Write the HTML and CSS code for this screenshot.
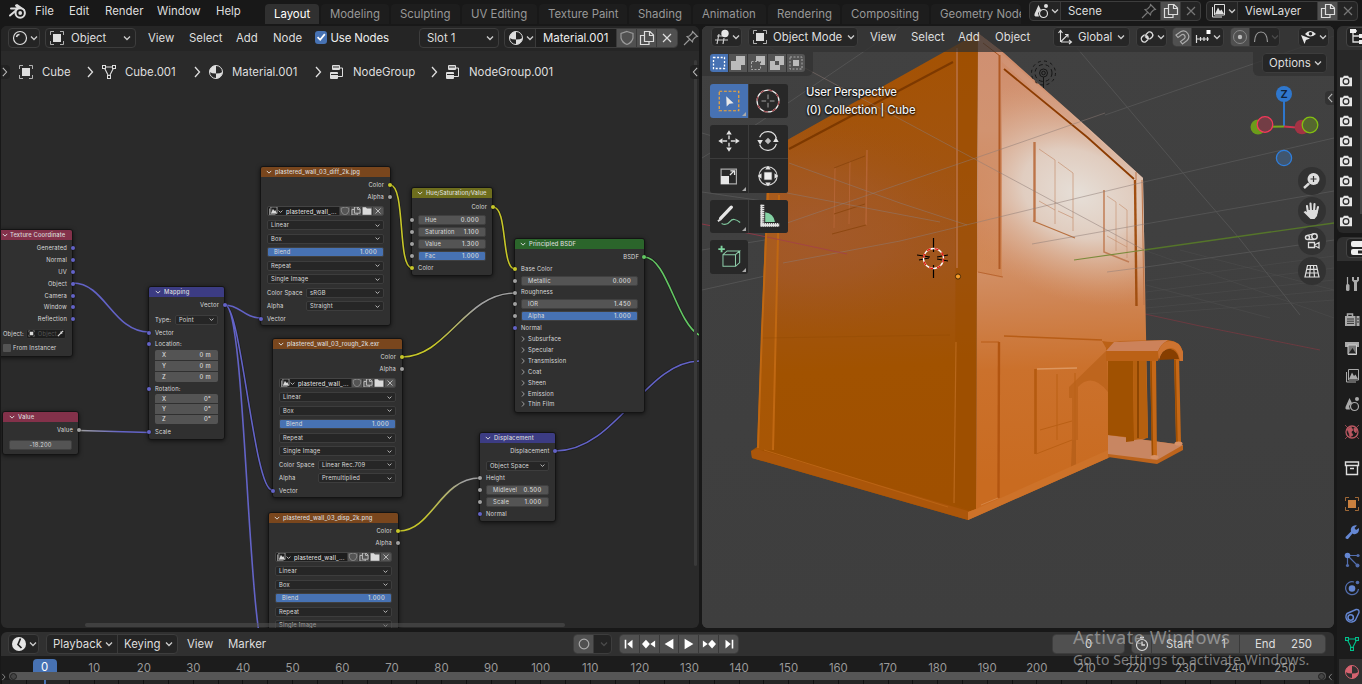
FILE: index.html
```html
<!DOCTYPE html>
<html lang="en">
<head>
<meta charset="utf-8">
<title>Blender</title>
<link rel="stylesheet" href="styles.css">
</head>
<body>
<svg class="defs" width="0" height="0">
  <symbol id="chev" viewBox="0 0 8 8"><path d="M1 2.5 4 5.5 7 2.5" fill="none" stroke="currentColor" stroke-width="1.3"/></symbol>
  <symbol id="right" viewBox="0 0 8 12"><path d="M2 1 6.5 6 2 11" fill="none" stroke="currentColor" stroke-width="1.3"/></symbol>
  <symbol id="obj" viewBox="0 0 16 16"><path d="M1.5 5V1.5H5M11 1.5h3.500V5M14.500 11v3.500H11M5 14.500H1.500V11" fill="none" stroke="currentColor" opacity=".75"/><rect x="4" y="4" width="8" height="8" fill="currentColor"/></symbol>
  <symbol id="mesh" viewBox="0 0 16 16"><path d="M3 3H13L8 13Z" fill="none" stroke="currentColor" stroke-width="1.1"/><g fill="#282828" stroke="currentColor"><rect x="1.500" y="1.500" width="3" height="3"/><rect x="11.500" y="1.500" width="3" height="3"/><rect x="6.500" y="11.500" width="3" height="3"/></g></symbol>
  <symbol id="mat" viewBox="0 0 16 16"><circle cx="8" cy="8" r="6.500" fill="none" stroke="currentColor"/><path d="M8 1.500A6.500 6.500 0 0 0 1.500 8Q4 9.500 8 9.500ZM8 9.500Q12 9.500 14.500 8A6.500 6.500 0 0 1 8 14.500Z" fill="currentColor"/></symbol>
  <symbol id="tree" viewBox="0 0 16 16"><rect x="3" y="1" width="8" height="5" rx="1" fill="currentColor"/><rect x="1" y="8" width="8" height="7" rx="1" fill="currentColor"/><path d="M11 4h2.500v8.500H9M1 11h8" fill="none" stroke="currentColor"/><path d="M2 10.500h7M4 3h6" stroke="#2a2a2a"/></symbol>
  <symbol id="shield" viewBox="0 0 16 16"><path d="M8 1.500 14 3.500V8Q13 12.500 8 14.500 3 12.500 2 8V3.500Z" fill="none" stroke="currentColor" stroke-width="1.2"/></symbol>
  <symbol id="copy" viewBox="0 0 16 16"><path d="M5.500 1.500H11L14.500 5V11.500H5.500ZM10.500 2V5.500H14M5 5.500H1.500V14.500H10V12" fill="none" stroke="currentColor" stroke-width="1.200"/></symbol>
  <symbol id="x" viewBox="0 0 16 16"><path d="M4 4 12 12M12 4 4 12" stroke="currentColor" stroke-width="1.200"/></symbol>
  <symbol id="pin" viewBox="0 0 16 16"><path d="M9.500 1.500 14.500 6.500 12.500 7 10 9.500 9.500 12 4 6.500 6.500 6 9 3.500ZM6.500 9.500 1 15" fill="none" stroke="currentColor" stroke-width="1.100"/></symbol>
  <symbol id="pic" viewBox="0 0 16 16"><path d="M4.500 4V1.500H14.500V12H4.500Z" fill="none" stroke="currentColor"/><path d="M5 11 8 4.500 10 8 11.500 6.500 14 11Z" fill="currentColor"/><path d="M2.500 4V14H12" fill="none" stroke="currentColor"/></symbol>
  <symbol id="folder" viewBox="0 0 16 16"><path d="M1 2H6L8 4H15V14H1Z" fill="currentColor"/></symbol>
  <symbol id="scene" viewBox="0 0 16 16"><path d="M5.500 2 8 7 5 10 6 13.500H2.500Q1 13 1.500 11Z" fill="currentColor"/><circle cx="10.500" cy="10.500" r="4" fill="none" stroke="currentColor" stroke-width="1.200"/><circle cx="13" cy="3" r="2" fill="currentColor"/></symbol>
  <symbol id="cam" viewBox="0 0 16 14"><path d="M1 3H4.500L5.500 1h5l1 2H15V13H1Z" fill="currentColor"/><circle cx="8" cy="7.500" r="3.300" fill="#e6e6e6" stroke="#2a2a2a" stroke-width="1.500"/></symbol>
  <symbol id="sel" viewBox="0 0 16 16"><path d="M2.500 2.500h11v11h-11z" fill="none" stroke="currentColor" stroke-width="1.300" stroke-dasharray="2 1.600"/></symbol>
</svg>

<div class="app">
  <header class="topbar">
    <svg class="logo" viewBox="0 0 20 18"><path d="M3 6.500H11L8 3.500M2 13.500 8.500 8" fill="none" stroke="#ddd" stroke-width="2" stroke-linecap="round"/><path d="M9 3 16 8" stroke="#ddd" stroke-width="2" stroke-linecap="round"/><circle cx="12.200" cy="11" r="4.700" fill="#181818" stroke="#ddd" stroke-width="2"/><circle cx="12.200" cy="11" r="1.900" fill="#ddd"/></svg>
    <nav class="menus"><span>File</span><span>Edit</span><span>Render</span><span>Window</span><span>Help</span></nav>
    <nav class="tabs"><span class="on">Layout</span><span>Modeling</span><span>Sculpting</span><span>UV Editing</span><span>Texture Paint</span><span>Shading</span><span>Animation</span><span>Rendering</span><span>Compositing</span><span>Geometry Nodes</span></nav>
    <div class="group scene"><span class="cell ed"><svg class="i"><use href="#scene"/></svg><svg class="c"><use href="#chev"/></svg></span><span class="cell name"><span>Scene</span><svg class="i dim"><use href="#pin"/></svg></span><span class="cell lit"><svg class="i"><use href="#copy"/></svg></span><span class="cell dim"><svg class="i"><use href="#x"/></svg></span></div>
    <div class="group layer"><span class="cell ed"><svg class="i"><use href="#pic"/></svg><svg class="c"><use href="#chev"/></svg></span><span class="cell name"><span>ViewLayer</span></span><span class="cell lit"><svg class="i"><use href="#copy"/></svg></span><span class="cell dim"><svg class="i"><use href="#x"/></svg></span></div>
  </header>

  <section class="shader">
    <div class="bar shader-bar">
      <div class="group"><span class="cell ed"><svg class="i" viewBox="0 0 16 16"><circle cx="8" cy="8" r="6.500" fill="none" stroke="#ddd" stroke-width="1.200"/><path d="M4.500 7Q5 4.500 7.500 4.500" fill="none" stroke="#ddd" stroke-width="1.500"/></svg><svg class="c"><use href="#chev"/></svg></span></div>
      <div class="group drop objsel"><svg class="i"><use href="#obj"/></svg><span>Object</span><svg class="c"><use href="#chev"/></svg></div>
      <nav class="mid"><span>View</span><span>Select</span><span>Add</span><span>Node</span></nav>
      <span class="check"><svg viewBox="0 0 12 12"><path d="M2.500 6 5 8.500 9.500 3" fill="none" stroke="#fff" stroke-width="1.700"/></svg></span><span class="usenodes">Use Nodes</span>
      <div class="group drop slot"><span>Slot 1</span><svg class="c"><use href="#chev"/></svg></div>
      <div class="group material"><span class="cell ed"><svg class="i"><use href="#mat"/></svg><svg class="c"><use href="#chev"/></svg></span><span class="cell name">Material.001</span><span class="cell lit soft"><svg class="i"><use href="#shield"/></svg></span><span class="cell lit"><svg class="i"><use href="#copy"/></svg></span><span class="cell lit"><svg class="i"><use href="#x"/></svg></span></div>
      <svg class="i pin"><use href="#pin"/></svg>
    </div>

    <svg class="links" viewBox="1 26 698 602">
      <defs>
        <linearGradient id="g1" gradientUnits="userSpaceOnUse" x1="80" y1="0" x2="149" y2="0"><stop offset="0" stop-color="#a0a0a0"/><stop offset=".6" stop-color="#6363c7"/></linearGradient>
        <linearGradient id="g2" gradientUnits="userSpaceOnUse" x1="402" y1="0" x2="515" y2="0"><stop offset=".3" stop-color="#c7c729"/><stop offset=".65" stop-color="#a1a1a1"/></linearGradient>
        <linearGradient id="g3" gradientUnits="userSpaceOnUse" x1="399" y1="0" x2="480" y2="0"><stop offset=".3" stop-color="#c7c729"/><stop offset=".8" stop-color="#a1a1a1"/></linearGradient>
      </defs>
      <g fill="none" stroke="#161616" stroke-width="3" opacity=".6"><path d="M390 185C406 185 397 268 412 268M493 207C508 207 501 269 515 269M402 357C447 357 465 293 515 293M644 257C667 257 676 322 699 335M555 451C617 451 645 361 700 361M225 305C241 305 254 490 272 490"/></g>
      <g fill="none" stroke-width="1.600">
        <path stroke="#6363c7" d="M73 283C105 283 113 332 149 332M225 305C240 305 244 318 261 318M225 305C241 305 254 490 272 490M225 305C247 305 247 664 269 664M555 451C617 451 645 361 700 361"/>
        <path stroke="url(#g1)" d="M79 430.500 149 432.500"/>
        <path stroke="#c7c729" d="M390 185C406 185 397 268 412 268M493 207C508 207 501 269 515 269"/>
        <path stroke="url(#g2)" d="M402 357C447 357 465 293 515 293"/>
        <path stroke="url(#g3)" d="M399 531C432 531 440 478 480 478"/>
        <path stroke="#63c763" d="M644 257C667 257 676 322 699 335"/>
      </g>
    </svg>

    <article class="node n-coord"><h3 class="red"><svg><use href="#chev"/></svg>Texture Coordinate</h3>
      <p class="r out v">Generated</p><p class="r out v">Normal</p><p class="r out v">UV</p><p class="r out v">Object</p><p class="r out v">Camera</p><p class="r out v">Window</p><p class="r out v">Reflection</p>
      <p class="r objrow">Object:<span class="f dark"><svg><use href="#obj"/></svg><em>Object</em><svg viewBox="0 0 8 8"><path d="M1 7 5 3M4 2 6 4M5 3 7 1" stroke="#ddd" stroke-width="1.400"/></svg></span></p>
      <p class="r inst"><i></i>From Instancer</p></article>

    <article class="node n-value"><h3 class="red"><svg><use href="#chev"/></svg>Value</h3><p class="r out g">Value</p><p class="r fld"><span class="f num one">-18.200</span></p></article>

    <article class="node n-map"><h3 class="blue"><svg><use href="#chev"/></svg>Mapping</h3>
      <p class="r out v">Vector</p><p class="r type">Type:<span class="f dark">Point<svg><use href="#chev"/></svg></span></p>
      <p class="r in v">Vector</p><p class="r in v">Location:</p>
      <div class="xyz"><span>X<b>0 m</b></span><span>Y<b>0 m</b></span><span>Z<b>0 m</b></span></div>
      <p class="r in v">Rotation:</p>
      <div class="xyz low"><span>X<b>0°</b></span><span>Y<b>0°</b></span><span>Z<b>0°</b></span></div>
      <p class="r in v">Scale</p></article>

    <article class="node img n-diff"><h3 class="brown"><svg><use href="#chev"/></svg>plastered_wall_03_diff_2k.jpg</h3>
      <p class="r out y">Color</p><p class="r out g">Alpha</p>
      <div class="file"><span><svg><use href="#pic"/></svg><svg class="s"><use href="#chev"/></svg></span><strong>plastered_wall_...</strong><span class="l dim"><svg><use href="#shield"/></svg></span><span class="l"><svg><use href="#copy"/></svg></span><span class="l"><svg><use href="#folder"/></svg></span><span class="l"><svg><use href="#x"/></svg></span></div>
      <p class="r d"><span class="f dark">Linear<svg><use href="#chev"/></svg></span></p><p class="r d"><span class="f dark">Box<svg><use href="#chev"/></svg></span></p><p class="r d"><span class="f num on">Blend<b>1.000</b></span></p><p class="r d"><span class="f dark">Repeat<svg><use href="#chev"/></svg></span></p><p class="r d"><span class="f dark">Single Image<svg><use href="#chev"/></svg></span></p>
      <p class="r d two">Color Space<span class="f dark">sRGB<svg><use href="#chev"/></svg></span></p><p class="r d two">Alpha<span class="f dark">Straight<svg><use href="#chev"/></svg></span></p><p class="r in v last">Vector</p></article>

    <article class="node img n-rough"><h3 class="brown"><svg><use href="#chev"/></svg>plastered_wall_03_rough_2k.exr</h3>
      <p class="r out y">Color</p><p class="r out g">Alpha</p>
      <div class="file"><span><svg><use href="#pic"/></svg><svg class="s"><use href="#chev"/></svg></span><strong>plastered_wall_...</strong><span class="l dim"><svg><use href="#shield"/></svg></span><span class="l"><svg><use href="#copy"/></svg></span><span class="l"><svg><use href="#folder"/></svg></span><span class="l"><svg><use href="#x"/></svg></span></div>
      <p class="r d"><span class="f dark">Linear<svg><use href="#chev"/></svg></span></p><p class="r d"><span class="f dark">Box<svg><use href="#chev"/></svg></span></p><p class="r d"><span class="f num on">Blend<b>1.000</b></span></p><p class="r d"><span class="f dark">Repeat<svg><use href="#chev"/></svg></span></p><p class="r d"><span class="f dark">Single Image<svg><use href="#chev"/></svg></span></p>
      <p class="r d two">Color Space<span class="f dark">Linear Rec.709<svg><use href="#chev"/></svg></span></p><p class="r d two">Alpha<span class="f dark">Premultiplied<svg><use href="#chev"/></svg></span></p><p class="r in v last">Vector</p></article>

    <article class="node img n-disp"><h3 class="brown"><svg><use href="#chev"/></svg>plastered_wall_03_disp_2k.png</h3>
      <p class="r out y">Color</p><p class="r out g">Alpha</p>
      <div class="file"><span><svg><use href="#pic"/></svg><svg class="s"><use href="#chev"/></svg></span><strong>plastered_wall_...</strong><span class="l dim"><svg><use href="#shield"/></svg></span><span class="l"><svg><use href="#copy"/></svg></span><span class="l"><svg><use href="#folder"/></svg></span><span class="l"><svg><use href="#x"/></svg></span></div>
      <p class="r d"><span class="f dark">Linear<svg><use href="#chev"/></svg></span></p><p class="r d"><span class="f dark">Box<svg><use href="#chev"/></svg></span></p><p class="r d"><span class="f num on">Blend<b>1.000</b></span></p><p class="r d"><span class="f dark">Repeat<svg><use href="#chev"/></svg></span></p><p class="r d"><span class="f dark">Single Image<svg><use href="#chev"/></svg></span></p></article>

    <article class="node n-hsv"><h3 class="olive"><svg><use href="#chev"/></svg>Hue/Saturation/Value</h3>
      <p class="r out y">Color</p><p class="r in g"><span class="f num">Hue<b>0.000</b></span></p><p class="r in g"><span class="f num">Saturation<b>1.100</b></span></p><p class="r in g"><span class="f num">Value<b>1.300</b></span></p><p class="r in g"><span class="f num on">Fac<b>1.000</b></span></p><p class="r in y">Color</p></article>

    <article class="node n-bsdf"><h3 class="green"><svg><use href="#chev"/></svg>Principled BSDF</h3>
      <p class="r out s">BSDF</p><p class="r in y">Base Color</p><p class="r in g"><span class="f num">Metallic<b>0.000</b></span></p><p class="r in g">Roughness</p><p class="r in g"><span class="f num">IOR<b>1.450</b></span></p><p class="r in g"><span class="f num on">Alpha<b>1.000</b></span></p><p class="r in v">Normal</p>
      <p class="r pan"><svg><use href="#right"/></svg>Subsurface</p><p class="r pan"><svg><use href="#right"/></svg>Specular</p><p class="r pan"><svg><use href="#right"/></svg>Transmission</p><p class="r pan"><svg><use href="#right"/></svg>Coat</p><p class="r pan"><svg><use href="#right"/></svg>Sheen</p><p class="r pan"><svg><use href="#right"/></svg>Emission</p><p class="r pan"><svg><use href="#right"/></svg>Thin Film</p></article>

    <article class="node n-dpl"><h3 class="blue"><svg><use href="#chev"/></svg>Displacement</h3>
      <p class="r out v">Displacement</p><p class="r space"><span class="f dark">Object Space<svg><use href="#chev"/></svg></span></p><p class="r in g">Height</p><p class="r in g"><span class="f num">Midlevel<b>0.500</b></span></p><p class="r in g"><span class="f num">Scale<b>1.000</b></span></p><p class="r in v">Normal</p></article>

    <div class="crumbs"><svg class="i"><use href="#obj"/></svg><span>Cube</span><svg class="a"><use href="#right"/></svg><svg class="i"><use href="#mesh"/></svg><span>Cube.001</span><svg class="a"><use href="#right"/></svg><svg class="i"><use href="#mat"/></svg><span>Material.001</span><svg class="a"><use href="#right"/></svg><svg class="i"><use href="#tree"/></svg><span>NodeGroup</span><svg class="a"><use href="#right"/></svg><svg class="i"><use href="#tree"/></svg><span>NodeGroup.001</span></div>
    <i class="sb-v"></i><i class="sb-h"></i>
    <span class="flap fl"><svg><use href="#right"/></svg></span><span class="flap fr"><svg><use href="#right"/></svg></span>
  </section>

  <section class="view">
    <svg class="world" viewBox="702 26 632 602">
      <defs>
        <linearGradient id="sky" x1="0" y1="0" x2="0" y2="1"><stop offset="0" stop-color="#414141"/><stop offset="1" stop-color="#3e3e3e"/></linearGradient>
        <linearGradient id="lf" gradientUnits="userSpaceOnUse" x1="850" y1="60" x2="880" y2="500"><stop offset="0" stop-color="#a45204"/><stop offset=".25" stop-color="#a2540f"/><stop offset=".45" stop-color="#a1561c"/><stop offset=".7" stop-color="#a15200"/><stop offset="1" stop-color="#a05000"/></linearGradient>
        <radialGradient id="lg" gradientUnits="userSpaceOnUse" cx="0" cy="0" r="1" gradientTransform="translate(810 225) scale(170 110)"><stop offset="0" stop-color="#a45c34" stop-opacity=".7"/><stop offset=".5" stop-color="#a35a2c" stop-opacity=".5"/><stop offset="1" stop-color="#a05418" stop-opacity="0"/></radialGradient>
        <linearGradient id="rf" gradientUnits="userSpaceOnUse" x1="1040" y1="50" x2="1055" y2="480"><stop offset="0" stop-color="#cf8b68"/><stop offset=".35" stop-color="#d8a588"/><stop offset=".58" stop-color="#cf8554"/><stop offset=".74" stop-color="#cb712c"/><stop offset="1" stop-color="#c96b20"/></linearGradient>
        <radialGradient id="rg" gradientUnits="userSpaceOnUse" cx="0" cy="0" r="1" gradientTransform="translate(1078 194) rotate(24) scale(145 105)"><stop offset="0" stop-color="#e6dfd8"/><stop offset=".4" stop-color="#e2d3c8" stop-opacity=".88"/><stop offset=".75" stop-color="#dcb59d" stop-opacity=".4"/><stop offset="1" stop-color="#d79c78" stop-opacity="0"/></radialGradient>
        <linearGradient id="strip" x1="0" y1="0" x2="0" y2="1"><stop offset="0" stop-color="#cf8f72"/><stop offset=".4" stop-color="#d19370"/><stop offset=".8" stop-color="#cd7a46" stop-opacity=".6"/><stop offset="1" stop-color="#cb6d22" stop-opacity=".2"/></linearGradient>
        <linearGradient id="edge" gradientUnits="userSpaceOnUse" x1="985" y1="40" x2="1143" y2="178"><stop offset="0" stop-color="#cf8f70"/><stop offset=".6" stop-color="#d6a488"/><stop offset="1" stop-color="#ddc3b3"/></linearGradient>
        <clipPath id="rc"><path d="M978 33 1004 53 1087 127 1143 178 1148 437 1108 458 968 520 976 509Z"/></clipPath>
      </defs>
      <rect x="702" y="26" width="632" height="602" fill="url(#sky)"/>
      <g stroke="#535353" fill="none">
        <path d="M702 158 760 122 900 27M702 192 770 202M702 133 712 136M702 250 765 240M702 290 765 276M770 48 803 67M1105 115 1305 46 1334 36M1077 48 1200 193 1239 238 1300 315M1144 182 1334 138M1145 224 1334 191M1146 267 1334 240" />
        <path d="M1146 281 1334 256M1146 292 1334 268M1146 300 1334 280M1146 308 1334 290M1144 250 1334 318M1146 285 1270 318M1146 314 1334 300M1180 250 1334 290" opacity=".4"/>
      </g>
      <path d="M702 224 767 237" stroke="#8a3845"/>
      <path d="M1145 314 1200 326 1320 350" stroke="#6a3a40" fill="none"/>
      <path d="M1144 250 1334 223" stroke="#55752a" stroke-width="1.400"/>

      <path d="M978 33 953 47 789 139 768 155 763 290 757 447 751 451 752 458 968 520 976 512Z" fill="url(#lf)"/>
      <path d="M978 33 953 47 789 139 768 155 763 290 757 447 751 451 752 458 968 520 976 512Z" fill="url(#lg)"/>
      <path d="M768 155 780 150 774 450 757 450 763 290Z" fill="#b9650f" opacity=".3"/>
      <path d="M779 195 773 450M768 193 762 330 758 448" stroke="#c06812" stroke-width="2" fill="none"/>
      <path d="M953 62 789 149" stroke="#7d3900" stroke-width="2.200"/>
      <path d="M956 47 978 33 976 512 955 505Z" fill="#9d4e00" opacity=".6"/>
      <path d="M957 48V268" stroke="#b87248" stroke-width="1.500"/><path d="M956 342 954 503" stroke="#b8671a" stroke-width="1.200"/>
      <path d="M751 451 757 449 968 511V520L752 458Z" fill="#ab560a"/><path d="M764 450 948 507" stroke="#ba6414"/>
      <path d="M763 338 950 335" stroke="#8d4700" opacity=".3"/>
      <g stroke="#b9683a" fill="none" opacity=".8"><path d="M835 168 834 228M850 161 849 224"/><path d="M867 150 866 225" stroke-width="1.500"/><path d="M834 168 865 156M834 214 865 204M832 234 866 225" stroke="#8a450d"/></g>

      <path d="M978 33 1004 53 1087 127 1143 178 1148 437 1108 458 968 520V512L976 509Z" fill="url(#rf)"/>
      <g clip-path="url(#rc)"><rect x="960" y="30" width="200" height="400" fill="url(#rg)"/>
        <path d="M978 33 1002 50V278L977 272Z" fill="url(#strip)"/>
        <path d="M978 33 1143 178 1140 182 1002 62Z" fill="url(#edge)" opacity=".8"/></g>
      <path d="M1004 69 1087 137 1134 179" stroke="#8c3c02" stroke-width="1.800" fill="none"/>
      <path d="M983 43 1000 56" stroke="#a2501c"/>
      <path d="M999.500 55V269" stroke="#b05a25" stroke-width="2"/><path d="M978 272 1003 277" stroke="#b96530"/>
      <path d="M1135 180 1136.500 306" stroke="#a14f11" stroke-width="2.400"/><path d="M1136 172V180M1142 180 1144 305" stroke="#bd7448"/>
      <path d="M1004 336 1102 340" stroke="#b85d16" stroke-width="1.500"/>
      <path d="M981 342H999" stroke="#b85d16"/><path d="M999 342 998.500 498" stroke="#b25510" stroke-width="2.400"/><path d="M981 505 998 498" stroke="#d48444"/>
      <g fill="none" stroke="#c28662"><path d="M1034.500 142V221" stroke="#bd7448" stroke-width="2.400"/><path d="M1033 221 1075 238" stroke="#b8703f" stroke-width="1.300"/><path d="M1039 149 1055 160V224M1058 162 1073 173V231M1039 201 1055 210M1058 211 1073 218" opacity=".6"/>
        <path d="M1104 190V252L1129 262" stroke="#c07d55" stroke-width="1.500"/><path d="M1107 196 1116 202V251M1119 204 1127 210V258M1107 236 1116 241 1127 247" opacity=".55"/></g>
      <path d="M1035.500 369V454" stroke="#b55b10" stroke-width="2.600"/>
      <path d="M1037 369 1077 368" stroke="#dc965f" stroke-width="1.500"/>
      <path d="M1057 374V440M1036 454 1072 440M1040 430 1072 421M1075 373V440" stroke="#ba6015" fill="none"/>
      <path d="M1069 387 1107 350 1108 392Q1092 372 1078 387V440H1072V398H1069Z" fill="#b9611a" opacity=".75"/>
      <path d="M1072 440H1076V464H1081V470L1071 468Z" fill="#b9611a"/>
      <path d="M968 512 976 509 1108 450V458L968 520Z" fill="#cd7229"/>

      <path d="M1108 435 1183 445 1183 450 1157 464 1108 457Z" fill="#bd641c"/><path d="M1108 435 1183 445 1157 460 1108 454Z" fill="#c88662"/>
      <path d="M1108 358 1133 358 1134 441 1126 442V437L1108 435Z" fill="#a05101"/>
      <path d="M1133 358H1146L1148 438 1134 440Z" fill="#b5600f"/><path d="M1138 360V438" stroke="#8d4602" stroke-width="2"/>
      <path d="M1174 357H1179L1181 443H1176ZM1150 358H1156L1157 458H1152Z" fill="#c56817"/><path d="M1151 360 1152.500 457M1175 360 1177 443" stroke="#9e4e00" stroke-width="1.500"/>
      <ellipse cx="1154.500" cy="457" rx="4" ry="2" fill="#d79166"/><ellipse cx="1178.500" cy="443.500" rx="4" ry="2" fill="#d79166"/>
      <path d="M1102 341Q1113 343 1120 341L1168 340Q1180 341 1183 352V361H1179Q1178 352 1170 349 1160 350 1158 361H1106V348Z" fill="#bb6116"/>
      <path d="M1114 342 1168 340Q1160 345 1158 351H1106Z" fill="#cc825a"/>
      <path d="M1158 352Q1162 341 1170 341 1180 341 1183 352V361H1180Q1178 348 1170 348 1162 349 1159 361Z" fill="#cd7330"/>
      <path d="M1159 360Q1162 349 1170 349 1177 350 1179 359Z" fill="#873e00"/>

      <g stroke="#8e7b76" fill="none" opacity=".5"><path d="M787 223 900 184 1022 142 1105 113M803 67 900 119 1144 250M783 263 900 241 1144 182M789 163 900 203 967 225M1032 244 1145 224M1107 272 1146 267M787 193 940 222"/></g>
      <path d="M767 237 847 254" stroke="#a5414a" opacity=".8"/><path d="M1074 260 1144 250" stroke="#7b8b3c" stroke-width="1.200"/>

      <g fill="none" stroke="#161616"><circle cx="1043.500" cy="73" r="12" stroke-dasharray="3 3.300"/><circle cx="1043.500" cy="73" r="8.500" stroke-dasharray="4 3"/><circle cx="1043.500" cy="73" r="4"/><circle cx="1043.500" cy="73" r="1.800"/><path d="M1043.500 77V88"/></g>
      <path d="M933.500 238V252M933.500 265V278M917 255 930 257M919 260 929 258M937 257 948 255M937 259 948 261" stroke="#000" stroke-width="1.200"/>
      <circle cx="933.500" cy="258.500" r="10" fill="none" stroke="#fff" stroke-width="1.300"/><circle cx="933.500" cy="258.500" r="10" fill="none" stroke="#e8140c" stroke-width="1.300" stroke-dasharray="4 4"/>
      <circle cx="958" cy="276.500" r="2.600" fill="#f59c28" stroke="#4a2a08"/>

      <g stroke-width="2"><path d="M1284 100V126" stroke="#2e76cc"/><path d="M1284 126.500 1262 127" stroke="#7ba81a"/><path d="M1284 126.500 1302 128" stroke="#d03550"/></g>
      <circle cx="1258" cy="127" r="7.500" fill="#6c9c1a"/><circle cx="1302" cy="127" r="7.300" fill="#a23344"/>
      <circle cx="1265" cy="124.500" r="7.800" fill="#733d45" stroke="#f5385a" stroke-width="1.300"/><circle cx="1310" cy="125" r="7.800" fill="#55672f" stroke="#83c011" stroke-width="1.300"/>
      <circle cx="1284" cy="94" r="8" fill="#2f77cd"/><circle cx="1284" cy="158" r="7.600" fill="#40566f" stroke="#2f7fdd" stroke-width="1.300"/>
      <text x="1284" y="98" class="axis">Z</text>
    </svg>

    <div class="bar view-bar">
      <div class="group"><span class="cell ed"><svg class="i" viewBox="0 0 16 16"><path d="M3 7H9M1 11H14M5 5 3 15M10 9 9 15" stroke="#ccc" stroke-width="1.200"/><circle cx="11" cy="4.500" r="3.700" fill="#e6e6e6"/></svg><svg class="c"><use href="#chev"/></svg></span></div>
      <div class="group drop mode"><svg class="i"><use href="#obj"/></svg><span>Object Mode</span><svg class="c"><use href="#chev"/></svg></div>
      <nav class="mid vm"><span>View</span><span>Select</span><span>Add</span><span>Object</span></nav>
      <div class="group drop orient"><svg class="i" viewBox="0 0 16 16"><path d="M3.500 13V2M1.500 4 3.500 1.500 5.500 4M4 13H14M12 11 14.500 13 12 15M4 12.500 11 5.500M8 5.500H11V8.500" fill="none" stroke="#ddd" stroke-width="1.100"/></svg><span>Global</span><svg class="c"><use href="#chev"/></svg></div>
      <div class="group pivot"><span class="cell ed"><svg class="i" viewBox="0 0 16 16"><path d="M7 5.500 9.500 3A3.300 3.300 0 0 1 13.500 7.500L11 10M9 10.500 6.500 13A3.300 3.300 0 0 1 2.500 8.500L5 6" fill="none" stroke="#ddd" stroke-width="1.300"/><path d="M5 6Q8 5 9 8T9 10.500M7 5.500Q5 8 8 9.500L11 10" fill="none" stroke="#ddd"/><circle cx="8" cy="8" r="1.500" fill="#ddd"/></svg><svg class="c"><use href="#chev"/></svg></span></div>
      <div class="group snap"><span class="cell lit soft"><svg class="i" viewBox="0 0 16 16"><path d="M2 6 7 2.500A5.500 5.500 0 0 1 13 11.500L8.500 15 6.500 12.500 10.500 9.500A2.500 2.500 0 0 0 8 5.500L4 8.500Z" fill="none" stroke="#aaa" stroke-width="1.200"/></svg></span><span class="cell ed"><svg class="i" viewBox="0 0 16 16"><path d="M1.500 6V14M5.500 8V12M9 8V12M12.500 8V12M1.500 10H14" stroke="#ddd" stroke-width="1.200"/><rect x="11.500" y="1" width="4" height="4" fill="#fff"/></svg><svg class="c"><use href="#chev"/></svg></span></div>
      <div class="group prop"><span class="cell lit"><svg class="i" viewBox="0 0 16 16"><circle cx="8" cy="8" r="6.500" fill="none" stroke="#888"/><circle cx="8" cy="8" r="2.200" fill="#bbb"/></svg></span><span class="cell ed"><svg class="i dim" viewBox="0 0 16 16"><path d="M1.500 13Q2 3 8 3T14.500 13" fill="none" stroke="#999" stroke-width="1.200"/></svg><svg class="c dimmer"><use href="#chev"/></svg></span></div>
      <div class="group vis"><span class="cell ed"><svg class="i" viewBox="0 0 16 16"><path d="M4 5Q9-1 15 5 9 10 4 5Z" fill="#e6e6e6"/><circle cx="9.500" cy="4.800" r="1.800" fill="#222"/><path d="M0 6 9 9.500 5 11 3.500 15Z" fill="#e6e6e6"/></svg><svg class="c"><use href="#chev"/></svg></span></div>
    </div>
    <div class="subbar">
      <div class="modes"><div class="segs"><span class="on"><svg><use href="#sel"/></svg></span><span><svg viewBox="0 0 16 16"><path d="M1 6H6V1H15V10H11V15H1Z" fill="#bbb"/></svg></span><span><svg viewBox="0 0 16 16"><path d="M6 1H15V10H11V6H6Z" fill="#bbb"/><path d="M1.500 6.500h9v8h-9z" fill="none" stroke="#aaa" stroke-dasharray="2 1.500"/></svg></span><span><svg viewBox="0 0 16 16"><path fill-rule="evenodd" d="M1 6H6V1H15V10H11V15H1ZM6 6V10H10V6Z" fill="#bbb"/></svg></span><span><svg viewBox="0 0 16 16"><path d="M2 2h12v12H2z" fill="none" stroke="#aaa" stroke-dasharray="2 1.500"/><path d="M5 5h6v6H5z" fill="#bbb"/></svg></span></div></div>
      <div class="opts"><div class="group drop">Options<svg class="c"><use href="#chev"/></svg></div></div>
    </div>
    <div class="tools">
      <div class="set"><span class="on corner"><svg viewBox="0 0 28 28"><rect x="3.500" y="3.500" width="21" height="21" fill="none" stroke="#f5a733" stroke-width="1.300" stroke-dasharray="3.200 1.800"/><path d="M11 9 19 16.500 14.500 17 11.500 20Z" fill="#e8e8e8"/></svg></span><span><svg viewBox="0 0 28 28"><circle cx="14" cy="14" r="11.800" fill="none" stroke="#eee" stroke-width="1.300"/><circle cx="14" cy="14" r="11.800" fill="none" stroke="#9a4147" stroke-width="1.300" stroke-dasharray="4.700 4.570"/><path d="M14 7V12M14 16V21M7 14H12M16 14H21" stroke="#aaa"/></svg></span></div>
      <div class="set"><span><svg viewBox="0 0 28 28"><path d="M14 8V12M14 16V20M7 14H12M16 14H21" stroke="#ddd" stroke-width="1.500"/><path d="M14 2.500 17 7H11ZM14 25.500 17 21H11ZM2.500 14 7 11V17ZM25.500 14 21 11V17Z" fill="#e3e3e3"/></svg></span><span><svg viewBox="0 0 28 28"><path d="M5 10A9.500 9.500 0 0 1 23 11M23 17A9.500 9.500 0 0 1 5 18" fill="none" stroke="#ddd" stroke-width="1.300"/><path d="M14 10.500 17.500 14 14 17.500 10.500 14Z" fill="#bbb"/><path d="M22.500 10 25.500 15H19.500ZM5.500 18 2.500 13H8.500Z" fill="#e3e3e3"/></svg></span>
        <span class="corner"><svg viewBox="0 0 28 28"><path d="M5.500 14V6.500H22V22.500H14" fill="none" stroke="#aaa" stroke-width="1.300"/><rect x="5" y="14" width="9" height="9" fill="#e6e6e6"/><path d="M15 13 19 9M15.500 8.500H20V13" fill="none" stroke="#e6e6e6" stroke-width="1.400"/></svg></span><span><svg viewBox="0 0 28 28"><circle cx="14" cy="14" r="9.800" fill="none" stroke="#ccc" stroke-width="1.300"/><rect x="9.500" y="9.500" width="9" height="9" fill="#eee" stroke="#282828"/><path d="M14 3 17 7H11ZM14 25 17 21H11ZM3 14 7 11V17ZM25 14 21 11V17Z" fill="#e3e3e3"/></svg></span></div>
      <div class="set"><span class="corner"><svg viewBox="0 0 28 28"><path d="M5 16.500 16.500 4.500" stroke="#e6e6e6" stroke-width="3.600" stroke-linecap="round"/><path d="M2 19.500 5.500 17.500" stroke="#ddd" stroke-width="2"/><path d="M6 22Q11 25 15 20T26 21" fill="none" stroke="#7fc79d" stroke-width="1.300"/></svg></span><span><svg viewBox="0 0 28 28"><path d="M8 2V25M6 23.500H26" fill="none" stroke="#e3e3e3" stroke-width="4" stroke-dasharray="1.500 .7"/><path d="M7 2V25M7 24H26" stroke="#e3e3e3" stroke-width="2"/><path d="M11 10Q20 11 21.500 20.500H11Z" fill="#84d2a4"/></svg></span></div>
      <div class="set single"><span class="corner"><svg viewBox="0 0 28 28"><path d="M7.500 11.500H21V24H7.500ZM7.500 11.500 12 7.500H25.500L21 11.500M25.500 7.500V20L21 24" fill="none" stroke="#8ccba8" stroke-width="1.100"/><path d="M6 2V9M2.500 5.500H9.500" stroke="#7fd5a0" stroke-width="2"/></svg></span></div>
    </div>
    <div class="info">User Perspective<br>(0) Collection | Cube</div>
    <div class="nav"><span><svg viewBox="0 0 20 20"><circle cx="11.500" cy="8" r="6" fill="#ddd"/><path d="M2 17 7 12.500" stroke="#ddd" stroke-width="2.400"/><path d="M8.500 8H14.500M11.500 5V11" stroke="#333" stroke-width="1.200"/></svg></span><span><svg viewBox="0 0 20 20"><path d="M6 12 5 5M9 11 8.500 2.500M12 11 12.500 3M14.500 12 16 6" stroke="#ddd" stroke-width="2.100" stroke-linecap="round"/><path d="M5 9H16L15 15 12.500 18H8.500L1.500 11 3.500 10 6 12Z" fill="#ddd"/></svg></span><span><svg viewBox="0 0 20 20"><circle cx="5.500" cy="6.500" r="2" fill="none" stroke="#ddd" stroke-width="1.500"/><circle cx="12.500" cy="5.500" r="2.700" fill="none" stroke="#ddd" stroke-width="1.500"/><path d="M5.500 4.300 12 2.800M6 8.500H12M6.500 11.500H12.500V16.500H6.500ZM12.500 14 17 11.500V17L12.500 14.500" fill="none" stroke="#ddd" stroke-width="1.300"/></svg></span><span><svg viewBox="0 0 20 20"><path d="M5.500 4.500H14.500L17 16H3ZM4.500 8.300H15.500M3.800 12H16.200M8.500 4.500 7.500 16M11.500 4.500 12.500 16" fill="none" stroke="#ddd" stroke-width="1.200"/></svg></span></div>
    <span class="flap fv"><svg><use href="#right"/></svg></span>
  </section>

  <section class="timeline">
    <div class="bar time-bar">
      <div class="group"><span class="cell ed"><svg class="i" viewBox="0 0 16 16"><circle cx="8" cy="8" r="7" fill="#e6e6e6"/><path d="M9.500 2.500 7 8.500 10.500 12" fill="none" stroke="#222" stroke-width="1.700"/></svg><svg class="c"><use href="#chev"/></svg></span></div>
      <div class="group play"><span class="cell">Playback<svg class="c"><use href="#chev"/></svg></span><span class="cell">Keying<svg class="c"><use href="#chev"/></svg></span></div>
      <nav class="mid tm"><span>View</span><span>Marker</span></nav>
      <div class="group rec"><span class="cell lit"><svg class="i" viewBox="0 0 16 16"><circle cx="8" cy="8" r="4.800" fill="none" stroke="#aaa" stroke-width="1.200"/></svg></span><span class="cell"><svg class="c dimmer"><use href="#chev"/></svg></span></div>
      <div class="group transport"><span class="cell lit"><svg viewBox="0 0 16 16"><path d="M4 3V13" stroke="#fff" stroke-width="1.800"/><path d="M12 3V13L6 8Z" fill="#fff"/></svg></span><span class="cell lit"><svg viewBox="0 0 16 16"><path d="M0 8 4.500 3 9 8 4.500 13ZM15 4V12L9.500 8Z" fill="#fff"/></svg></span><span class="cell lit"><svg viewBox="0 0 16 16"><path d="M13 2V14L3 8Z" fill="#fff"/></svg></span><span class="cell lit"><svg viewBox="0 0 16 16"><path d="M3 2V14L13 8Z" fill="#fff"/></svg></span><span class="cell lit"><svg viewBox="0 0 16 16"><path d="M7 8 11.500 3 16 8 11.500 13ZM1 4V12L6.500 8Z" fill="#fff"/></svg></span><span class="cell lit"><svg viewBox="0 0 16 16"><path d="M12 3V13" stroke="#fff" stroke-width="1.800"/><path d="M4 3V13L10 8Z" fill="#fff"/></svg></span></div>
      <div class="group frame"><span class="cell lit">0</span></div>
      <div class="group range"><span class="cell lit"><svg class="i" viewBox="0 0 16 16"><circle cx="8" cy="9" r="5.500" fill="none" stroke="#ddd" stroke-width="1.200"/><path d="M8 5.500V9H11M6 1.500H10" fill="none" stroke="#ddd" stroke-width="1.300"/></svg></span><span class="cell lit val">Start<b>1</b></span><span class="cell lit val">End<b>250</b></span></div>
    </div>
    <div class="ruler"><span class="cur"><b>0</b></span><span>10</span><span>20</span><span>30</span><span>40</span><span>50</span><span>60</span><span>70</span><span>80</span><span>90</span><span>100</span><span>110</span><span>120</span><span>130</span><span>140</span><span>150</span><span>160</span><span>170</span><span>180</span><span>190</span><span>200</span><span>210</span><span>220</span><span>230</span><span>240</span><span>250</span></div>
    <div class="scroll"><i></i><i></i></div>
    <div class="ticks"><i></i></div>
    <svg class="tl-l"><use href="#right"/></svg><svg class="tl-r"><use href="#right"/></svg>
  </section>

  <aside class="outliner"><div class="ohead"><span><svg viewBox="0 0 20 16"><path d="M1 2H7M3 3V13H10M3 7H10" fill="none" stroke="#ddd" stroke-width="1.300"/><rect x="0" y="0" width="6" height="4" fill="#eee"/><rect x="9" y="5" width="10" height="4" fill="#eee"/><rect x="9" y="11" width="10" height="4" fill="#eee"/></svg></span></div>
    <div class="cams"><svg><use href="#cam"/></svg><svg><use href="#cam"/></svg><svg><use href="#cam"/></svg><svg><use href="#cam"/></svg><svg><use href="#cam"/></svg><svg><use href="#cam"/></svg><svg><use href="#cam"/></svg><svg><use href="#cam"/></svg></div><i class="osb"></i></aside>

  <aside class="props"><div class="phead"><span><svg viewBox="0 0 20 16"><rect x="1" y="1" width="20" height="6" rx="2" fill="#eee"/><rect x="1" y="9" width="20" height="6" rx="2" fill="#eee"/><path d="M12 2.500H20V5.500H12ZM8 10.500H20V13.500H8Z" fill="#222"/></svg></span></div>
    <div class="ptabs">
      <svg class="t0" viewBox="0 0 16 16"><path d="M3.500 1V8M3.500 8V14" stroke="#aaa" stroke-width="1.200"/><rect x="2" y="8" width="3.500" height="7" rx="1.500" fill="#aaa"/><path d="M8 1V4.500L10 6.500V15H13V6.500L15 4.500V1H13V4H10V1Z" fill="#aaa"/></svg>
      <svg viewBox="0 0 16 16"><path d="M3.500 4V2H8.500V4" fill="none" stroke="#aaa" stroke-width="1.500"/><path d="M1 4H11.500V14H1ZM12.500 4H15.500V14H12.500Z" fill="#aaa"/><path d="M3 7H10M3 9.200H10M3 11.400H10M13 7H15M13 10H15" stroke="#333"/></svg>
      <svg viewBox="0 0 16 16"><path d="M1 2H15V7H1Z" fill="#aaa"/><path d="M4 5H12.500V14.500H4Z" fill="#777" stroke="#ccc"/><path d="M5 13 8.500 8 11.500 13Z" fill="#222"/></svg>
      <svg class="lt"><use href="#pic"/></svg>
      <svg class="lt"><use href="#scene"/></svg>
      <svg class="rd" viewBox="0 0 16 16"><circle cx="8" cy="8" r="6" fill="none" stroke="#b95761" stroke-width="1.300"/><path d="M3 5 7 3 9 6 7 8 9 11 6 13 5 9ZM10 4 13 5 12 9 10 7ZM1 1 4 4M12 12 15 15M15 1 13 3M1 15 4 12" fill="#b95761" stroke="#b95761" stroke-width=".7"/></svg>
      <svg class="gap" viewBox="0 0 16 16"><path d="M1.500 2H14.500V5.500H1.500ZM2.500 5.500V14.500H13.500V5.500M6 8.500H10" fill="none" stroke="#ddd" stroke-width="1.400"/></svg>
      <svg class="gap or"><use href="#obj"/></svg>
      <svg viewBox="0 0 16 16"><path d="M1.500 13 7 7.500Q6 4 9 2 11 1 13 1.500L10.500 4 12 6 15 4Q15.500 9 11.500 10 9.500 10.500 8.500 9.500L4 15Q1 15.500 1.500 13Z" fill="#6587d3"/></svg>
      <svg viewBox="0 0 16 16"><path d="M3.500 3.500H13M3.500 3.500 13 13M3.500 4V13" stroke="#526dad" stroke-width="1.200"/><circle cx="3.500" cy="3.500" r="2.800" fill="#6587d3"/><circle cx="14" cy="3.500" r="1.600" fill="#526dad"/><circle cx="13.500" cy="13.500" r="2" fill="#526dad"/><circle cx="3.500" cy="13.500" r="1.600" fill="#526dad"/></svg>
      <svg viewBox="0 0 16 16"><path d="M10 2A6.500 6.500 0 1 0 14.500 9" fill="none" stroke="#526dad" stroke-width="1.300"/><circle cx="8" cy="8.500" r="3.300" fill="#6587d3"/><circle cx="13.500" cy="2.500" r="1.800" fill="#526dad"/></svg>
      <svg viewBox="0 0 16 16"><path d="M3 5.500 12 1.500Q15.500 1 15 4.500L11.500 12A5.200 5.200 0 1 1 3 5.500Z" fill="none" stroke="#6587d3" stroke-width="1.400"/><circle cx="6.700" cy="9.500" r="2.700" fill="none" stroke="#6587d3" stroke-width="1.600"/></svg>
      <svg class="gr"><use href="#mesh"/></svg>
      <svg class="pk"><use href="#mat"/></svg>
    </div></aside>
</div>
<div class="watermark"><p>Activate Windows</p><p>Go to Settings to activate Windows.</p></div>
</body>
</html>
```

FILE: styles.css
```css
* { box-sizing: border-box; }
body { margin: 0; width: 1362px; height: 684px; overflow: hidden; background: #181818; color: #dedede; font: 11.4px/14px Inter, "Noto Sans", sans-serif; white-space: nowrap; }
p, h3 { margin: 0; font-weight: 400; }
b, strong { font-weight: 400; }
svg { display: block; flex: none; }
.defs { position: absolute; }
.app { display: grid; grid-template-columns: 1px 698px 3px 632px 3px 25px; grid-template-rows: 26px 602px 4px 52px; width: 1362px; height: 684px; }
.i { width: 16px; height: 16px; }
.c { width: 8px; height: 8px; color: #ccc; }
.dim { color: #777; }
.dimmer, .c.dimmer { color: #4a4a4a; }

/* window header */
.topbar { grid-column: 1 / -1; display: flex; align-items: flex-start; }
.logo { width: 20px; height: 18px; margin: 2px 0 0 8px; }
.menus { display: grid; grid-template-columns: 34px 36px 52px 59px 49px; margin: 4px 0 0 7px; }
.tabs { display: grid; grid-template-columns: 54px 68px 69px 75px 88px 62px 73px 72px 87px 90px; column-gap: 2px; width: 756px; margin: 4px 1px 0 0; overflow: hidden; color: #989898; }
.tabs span { height: 20px; padding: 3px 0 0 9px; background: #1d1d1d; border-radius: 4px 4px 0 0; }
.tabs .on { background: #303030; color: #fff; }
.group { display: flex; height: 20px; flex: none; align-items: stretch; border: 1px solid #3d3d3d; border-radius: 4px; background: #242424; overflow: hidden; }
.cell { display: flex; align-items: center; justify-content: center; width: 20px; flex: none; border-right: 1px solid #3a3a3a; }
.cell:last-child { border-right: 0; }
.cell.ed { width: 31px; gap: 2px; justify-content: flex-start; padding-left: 3px; }
.group > .ed:only-child { width: 29px; padding-left: 2px; }
.cell.name { background: #1d1d1d; padding-left: 7px; justify-content: space-between; }
.lit { background: #505050; border-right-color: #3a3a3a; }
.soft { color: #999; }
.scene { margin: 1px 0 0 7px; width: 172px; }
.scene .name { width: 100px; padding-right: 3px; }
.layer { margin: 1px 0 0 5px; width: 152px; }
.layer .name { width: 80px; }

/* editor headers */
.bar { display: flex; align-items: center; height: 25px; }
.drop { align-items: center; padding: 0 4px 0 7px; }
.drop .c { margin-left: auto; }
.mid { display: grid; }
.shader { grid-column: 2; position: relative; overflow: hidden; border-radius: 6px; background-color: #2a2a2a; }
.shader-bar { position: relative; z-index: 2; background: #252525; padding: 0 0 2px 7px; }
.shader-bar .group > .ed:only-child { width: 30px; padding-left: 3px; }
.objsel { width: 91px; margin-left: 5px; padding-left: 3px; gap: 6px; }
.mid { grid-template-columns: 41px 47px 37px 42px; margin-left: 12px; }
.check { width: 13px; height: 13px; background: #4772b3; border-radius: 3px; margin-right: 3px; }
.usenodes { width: 93px; color: #eee; letter-spacing: -.1px; }
.slot { width: 80px; padding-left: 7px; }
.material { margin-left: 5px; width: 174px; }
.material .name { width: 81px; color: #eee; }
.pin { margin-left: 5px; color: #999; }
.crumbs { position: absolute; z-index: 3; left: 17px; top: 38px; display: grid; grid-template-columns: 24px 44px 15px 24px 68px 15px 24px 82px 15px 24px 77px 15px 24px 100px; align-items: center; }
.crumbs .a { width: 8px; height: 12px; }
.links { position: absolute; inset: 0; width: 698px; height: 602px; }
.flap { position: absolute; display: flex; align-items: center; width: 9px; height: 14px; background: #222; z-index: 4; }
.flap svg { width: 7px; height: 10px; color: #bbb; }
.fl { left: 0; top: 39px; border-radius: 0 4px 4px 0; }
.fr { right: 0; top: 39px; transform: scaleX(-1); border-radius: 0 4px 4px 0; }
.fv { right: 0; top: 65px; transform: scaleX(-1); border-radius: 0 4px 4px 0; background: #333; }
.sb-v { position: absolute; right: 2px; top: 34px; width: 3px; height: 506px; background: #3a3a3a; border-radius: 2px; }
.sb-h { position: absolute; left: 84px; top: 597px; width: 480px; height: 4px; background: #55555588; border-radius: 2px; }

/* nodes */
.node { position: absolute; width: 131px; padding: 0 0 4px; background: #303030; border: 1px solid #141414; border-radius: 3px; box-shadow: 0 1px 4px #0009; font-size: 5.800px; font-weight: 500; letter-spacing: .17px; line-height: 10px; color: #dadada; }
.node h3 { display: flex; align-items: center; gap: 3px; height: 10px; margin-bottom: 2px; padding-left: 5px; border-radius: 2px 2px 0 0; font-size: 5.800px; font-weight: 500; }
.node b, .node strong { font-weight: 500; }
.node b { letter-spacing: .35px; }
.node h3 svg { width: 6px; height: 6px; }
.red { background: #83314a; } .blue { background: #3c3c83; } .brown { background: #79461d; } .olive { background: #6e6e1d; } .green { background: #2b652b; }
.r { position: relative; display: flex; align-items: center; height: 12px; padding: 0 6px; }
.r.d { height: 13.500px; }
.out { justify-content: flex-end; padding-right: 5px; }
.in::before, .out::after { content: ""; position: absolute; top: 4px; width: 4px; height: 4px; border-radius: 50%; background: var(--s); box-shadow: 0 0 0 .6px #1115; }
.in::before { left: -2.500px; } .out::after { right: -2.500px; }
.v { --s: #6363c7; } .g { --s: #a1a1a1; } .y { --s: #c7c729; } .s { --s: #63c763; }
.f { display: flex; align-items: center; flex: 1; height: 10px; padding: 0 3px; border: 1px solid #3d3d3d; border-radius: 2px; background: #545454; }
.f.dark { background: #262626; }
.f svg { width: 5px; height: 5px; margin-left: auto; }
.f.num { padding: 0 6px; border-color: #404040; }
.f b { margin-left: auto; }
.f.on { background: #4772b3; }
.f.one { justify-content: center; }
.img .out { padding-right: 6px; }
.img .out::after, .n-bsdf .out::after { right: -1.500px; }
.img > h3 { letter-spacing: .13px; }
.file { display: flex; height: 10px; margin: 3px 6px 2.500px; border-radius: 2px; overflow: hidden; background: #1d1d1d; border: .5px solid #444; }
.file span { display: flex; align-items: center; justify-content: center; width: 15px; }
.file span.l { width: 11px; background: #545454; border-left: 1px solid #3a3a3a; }
.file strong { flex: 1; padding-left: 3px; }
.file svg { width: 10px; height: 10px; } .file .s { width: 5px; height: 5px; }
.file .dim { color: #999; }
.two .f { flex: none; width: 78px; margin-left: auto; }
.img .last { margin-top: -.5px; }
.n-coord { left: -4px; top: 203px; width: 76px; height: 128px; }
.n-coord h3 { padding-left: 4px; gap: 2px; letter-spacing: .13px; }
.n-coord .r { height: 11.900px; }
.n-coord .objrow { height: 17px; padding-left: 5px; gap: 2px; }
.objrow .f { padding: 0 1px; border-color: #333; background: #1d1d1d; }
.objrow svg { width: 7px; height: 7px; margin: 0; } .objrow em { font-style: normal; color: #555; margin-left: 3px; flex: 1; width: 10px; }
.inst { gap: 2px; } .inst i { width: 8px; height: 8px; background: #545454; border-radius: 1px; }
.n-coord .inst { padding-left: 5px; }
.n-value { left: 1px; top: 385px; width: 77px; height: 44px; }
.n-value h3, .n-map h3 { padding-left: 6px; }
.fld { margin-top: 3px; }
.n-map { left: 147px; top: 260px; width: 77px; height: 154px; }
.type { height: 17px; } .type .f { flex: none; width: 43px; margin-left: auto; }
.n-map .type + .r { height: 11px; margin-top: -1px; }
.xyz { display: grid; grid-template-rows: repeat(3, 1fr); gap: 1px; height: 32px; margin: -.5px 6px 1.500px; border-radius: 2px; overflow: hidden; }
.xyz span { display: flex; align-items: center; justify-content: space-between; padding: 0 7px; background: #545454; line-height: 8px; }
.xyz.low { height: 30px; margin-top: -1px; margin-bottom: 2px; }
.n-diff { left: 259px; top: 140px; height: 160px; }
.n-rough { left: 271px; top: 312px; height: 160px; }
.n-disp { left: 267px; top: 486px; height: 160px; }
.n-hsv { left: 410px; top: 161px; width: 82px; height: 89px; }
.n-hsv .out { margin-bottom: 1px; } .n-hsv h3 { margin-bottom: 3px; letter-spacing: .05px; }
.n-bsdf { left: 513px; top: 212px; height: 175px; }
.n-bsdf .r { height: 11.850px; }
.n-bsdf .pan { height: 10.850px; gap: 3px; } .pan svg { width: 4px; height: 6px; }
.n-dpl { left: 478px; top: 406px; width: 76.500px; height: 90px; }
.n-dpl .space { height: 17px; margin-bottom: -2px; }

/* viewport */
.view { grid-column: 4; position: relative; overflow: hidden; border-radius: 6px; background: #3f3f3f; }
.world { position: absolute; inset: 0; width: 632px; height: 602px; }
.axis { font: 600 11px Inter, sans-serif; text-anchor: middle; fill: #10223a; }
.view-bar { position: relative; height: 26px; padding: 0 0 4px 9px; background: #303030b8; }
.view-bar .group { background: #262626; }
.mode { width: 110px; margin-left: 6px; padding-left: 3px; gap: 5px; }
.mid.vm { grid-template-columns: 41px 47px 37px 58px; margin-left: 12px; }
.orient { width: 77px; padding-left: 3px; gap: 5px; }
.pivot { margin-left: 6px; } .snap { margin-left: 5px; width: 52px; } .snap .lit { width: 19px; }
.prop { margin-left: 6px; width: 50px; } .prop .lit { width: 19px; } .vis { margin-left: 18px; }
.subbar { position: relative; display: flex; justify-content: space-between; height: 24px; }
.modes { width: 111px; padding: 2px 8px; background: #303030b8; border-radius: 0 0 6px; }
.segs { display: flex; width: 95px; height: 18px; gap: 1px; border-radius: 3px; overflow: hidden; }
.segs span { flex: 1; display: flex; align-items: center; justify-content: center; background: #545454; }
.segs .on { background: #4772b3; color: #fff; } .segs svg { width: 16px; height: 16px; }
.opts { width: 81px; padding: 1px 7px 2px 9px; background: #303030b8; border-radius: 0 0 0 6px; }
.opts .group { background: #262626; padding-left: 6px; }
.tools { position: relative; display: flex; flex-direction: column; gap: 7px; margin: 8px 0 0 8px; width: 78px; }
.set { display: grid; grid-template-columns: 38px 39px; gap: 1px; border-radius: 3px; overflow: hidden; background: #3c3c3c; }
.set.single { width: 38px; grid-template-columns: 38px; }
.set span { position: relative; display: flex; height: 33.500px; align-items: center; justify-content: center; background: #282828; }
.set .on { background: #4772b3; } .set svg { width: 26px; height: 26px; }
.set span:nth-child(even) { padding-right: 1px; }
.corner::after { content: ""; position: absolute; right: 2px; bottom: 2px; border: 2px solid; border-color: transparent #aaa #aaa transparent; }
.info { position: absolute; left: 104px; top: 57px; font-size: 11.300px; letter-spacing: -.1px; line-height: 18px; font-weight: 500; color: #f2f2f2; text-shadow: 0 0 2px #000, 0 1px 2px #000; }
.nav { position: absolute; right: 8px; top: 141px; display: flex; flex-direction: column; gap: 2px; }
.nav span { display: flex; align-items: center; justify-content: center; width: 28px; height: 28px; border-radius: 50%; background: #323232; } .nav svg { width: 20px; height: 20px; }

/* timeline */
.timeline { grid-column: 1 / 5; grid-row: 4; position: relative; margin-left: 1px; border-radius: 6px 6px 0 0; overflow: hidden; background: #1c1c1c; }
.time-bar { height: 24px; padding-left: 7px; background: #303030; }
.play { margin-left: 7px; width: 132px; } .play .cell { width: 71px; justify-content: space-between; padding: 0 4px 0 6px; } .play .cell + .cell { width: 59px; }
.tm { grid-template-columns: 41px 50px; margin-left: 9px; }
.rec { margin-left: 295px; width: 39px; }
.transport { margin-left: 7px; width: 120px; } .transport .cell { flex: 1; width: auto; } .transport svg { width: 14px; height: 14px; }
.frame { width: 73px; margin-left: 313px; } .frame .cell { width: 71px; }
.range { margin-left: 6px; width: 195px; } .range .val { width: 88px; justify-content: space-between; padding: 0 13px 0 14px; } .range .val:last-child { width: 85px; padding-left: 15px; }
.ruler { display: grid; grid-template-columns: repeat(26, 49.620px); height: 16px; margin-left: 18.800px; color: #999; text-align: center; padding-top: 5px; }
.cur { display: flex; justify-content: center; margin-top: -2px; }
.cur b { width: 24px; height: 14px; padding-top: 1px; border-radius: 4px 4px 0 0; background: #4772b3; color: #fff; }
.scroll { position: relative; display: flex; justify-content: space-between; align-items: center; height: 8px; margin: 0 8px; border-radius: 4px; background: #565656; padding: 0 1px; }
.scroll i { width: 7px; height: 7px; border: 1px solid #222; border-radius: 50%; background: #444; }
.ticks { height: 4px; background: repeating-linear-gradient(90deg, #111 0 1px, transparent 1px 24.810px) 43px 0 #252525; }
.ticks i { display: block; margin-left: 43px; width: 2px; height: 4px; background: #4772b3; }
.tl-l, .tl-r { position: absolute; top: 41px; width: 5px; height: 8px; color: #999; }
.tl-l { left: 0; } .tl-r { right: 1px; transform: scaleX(-1); }

/* right column */
.outliner { grid-column: 6; grid-row: 2; position: relative; height: 207px; overflow: hidden; border-radius: 6px 0 0 6px; background: #282828; }
.ohead, .phead { height: 24px; padding: 1px 0 0 9px; background: #303030; }
.ohead span, .phead span { display: flex; align-items: center; width: 30px; height: 20px; padding-left: 3px; border: 1px solid #444; border-radius: 4px; background: #222; }
.ohead svg, .phead svg { width: 20px; height: 16px; }
.cams { display: flex; flex-direction: column; gap: 8px; padding: 24.500px 0 0 2px; color: #e6e6e6; } .cams svg { width: 14px; height: 12px; }
.osb { position: absolute; left: 23px; top: 34px; width: 2px; height: 154px; background: #444; }
.props { grid-column: 6; grid-row: 2 / 5; margin-top: 211px; border-radius: 6px 0 0 0; overflow: hidden; background: #1c1c1c; }
.ptabs { display: flex; flex-direction: column; gap: 12px; padding: 15px 0 0 7px; }
.ptabs svg { width: 16px; height: 16px; }
.ptabs .t0, .ptabs .gap { margin-bottom: 8px; } .ptabs .rd { margin-bottom: 8px; } .ptabs .or { margin-bottom: 0; }
.lt { color: #aaa; } .or { color: #c9803f; } .gr { color: #00c08b; } .pk { color: #d5626f; box-shadow: 0 0 0 5px #303030; background: #303030; }

.watermark { position: absolute; left: 1073px; top: 626px; color: #b0b0b0aa; font-family: "Noto Sans", "Open Sans", sans-serif; }
.watermark p { font-size: 18.200px; letter-spacing: .45px; line-height: 22px; }
.watermark p + p { font-size: 14px; letter-spacing: .13px; line-height: 23px; }
```
